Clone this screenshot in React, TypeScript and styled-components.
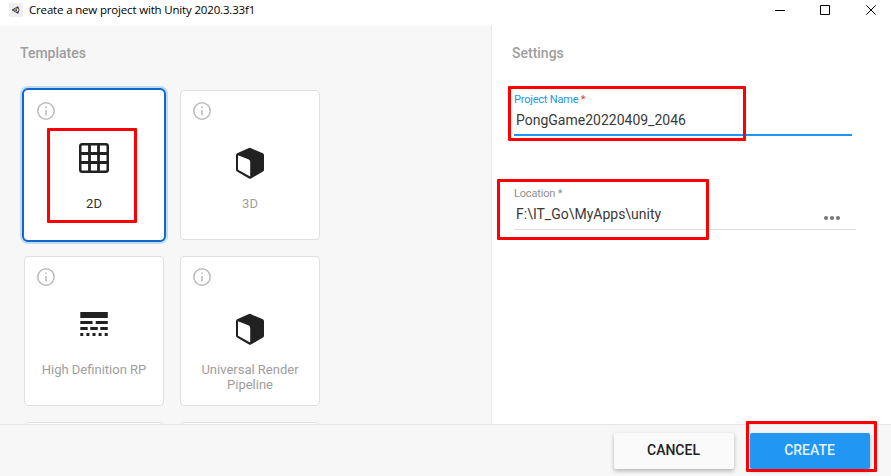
import React from "react";
import styled, { createGlobalStyle } from "styled-components";

const GlobalStyle = createGlobalStyle`
  * { box-sizing: border-box; }
  body { margin: 0; overflow: hidden; font-family: Roboto, sans-serif; background: #fff; }
  svg { display: block; }
`;

const Window = styled.div`
  position: relative;
  width: 891px;
  height: 476px;
  display: flex;
  flex-direction: column;
  overflow: hidden;
`;

const TitleBar = styled.header`
  flex: none;
  height: 26px;
  display: flex;
  align-items: flex-start;
  padding-left: 9px;
  background: #fff;
`;

const AppIcon = styled.svg`
  margin-top: 3px;
`;

const Title = styled.span`
  margin-left: 6px;
  flex: 1;
  font: 11.5px/20px "Open Sans", sans-serif;
  letter-spacing: -0.17px;
  color: #000;
  white-space: nowrap;
`;

const WindowControls = styled.div`
  display: flex;
  gap: 35px;
  padding: 5px 15px 0 0;
`;

const Body = styled.main`
  flex: 1;
  min-height: 0;
  display: flex;
`;

const TemplatesPane = styled.section`
  width: 492px;
  border-right: 1px solid #e8e8e8;
  background: #f7f7f7;
  overflow: hidden;
`;

const SettingsPane = styled.section`
  flex: 1;
  background: #fff;
`;

const Heading = styled.h2`
  margin: 17px 0 0 20px;
  font-size: 14px;
  line-height: 20px;
  font-weight: 500;
  color: #9e9e9e;
`;

const Cards = styled.div`
  display: grid;
  grid-template-columns: 140px 140px;
  grid-auto-rows: 150px;
  gap: 16px;
  margin: 27px 0 0 24px;
`;

const Card = styled.div<{ $selected?: boolean }>`
  display: flex;
  flex-direction: column;
  align-items: center;
  background: #fff;
  border: ${p => (p.$selected ? "2px solid #1069c9" : "1px solid #e0e0e0")};
  border-radius: ${p => (p.$selected ? 6 : 4)}px;
  margin: ${p => (p.$selected ? -2 : 0)}px;
  padding: ${p => (p.$selected ? "12px 13px" : "11px 12px")};
  box-shadow: ${p => (p.$selected ? "0 0 0 2px #c0dbf7" : "none")};
`;

const InfoIcon = styled.svg`
  align-self: flex-start;
  flex: none;
`;

const Picture = styled.div<{ $drop: number }>`
  height: 72px;
  padding-top: ${p => p.$drop}px;
`;

const CardName = styled.div<{ $selected?: boolean }>`
  margin-top: 2px;
  width: 116px;
  text-align: center;
  font-size: 13px;
  line-height: 15px;
  color: ${p => (p.$selected ? "#303030" : "#9e9e9e")};
`;

const Fields = styled.div`
  display: flex;
  flex-direction: column;
  gap: 51px;
  padding: 30px 0 0 22px;
`;

const Field = styled.label<{ $active?: boolean }>`
  display: flex;
  flex-direction: column;
  width: ${p => (p.$active ? 338 : 342)}px;
  height: 43px;
  border-bottom: ${p => (p.$active ? "2px solid #2196f3" : "1px solid #dedede")};
`;

const FieldLabel = styled.span<{ $active?: boolean }>`
  font-size: 11px;
  line-height: 14px;
  letter-spacing: ${p => (p.$active ? "-0.2px" : "-0.18px")};
  color: ${p => (p.$active ? "#2196f3" : "#8f8f8f")};
`;

const Required = styled.span<{ $active?: boolean }>`
  color: ${p => (p.$active ? "#e53935" : "inherit")};
`;

const ValueRow = styled.div`
  display: flex;
  align-items: center;
  justify-content: space-between;
  padding: 3px 15px 0 2px;
`;

const Value = styled.span`
  font-size: 14px;
  line-height: 20px;
  color: #3a3a3a;
  white-space: nowrap;
`;

const Browse = styled.svg`
  margin-right: 1px;
`;

const Footer = styled.footer`
  flex: none;
  height: 52px;
  display: flex;
  justify-content: flex-end;
  gap: 16px;
  padding: 8px 21px 0 0;
  border-top: 1px solid #e6e6e6;
  background: #f7f7f7;
`;

const Button = styled.button<{ $primary?: boolean }>`
  width: 120px;
  height: 36px;
  border: 0;
  border-radius: 2px;
  padding: 0 1px 2px 0;
  font: 500 14px/34px Roboto, sans-serif;
  color: ${p => (p.$primary ? "#e3f2fd" : "#212121")};
  background: ${p => (p.$primary ? "#2196f3" : "#fafafa")};
  box-shadow: 0 2px 4px rgba(0, 0, 0, 0.28);
`;

const Highlight = styled.div<{ $x: number; $y: number; $w: number; $h: number }>`
  position: absolute;
  left: ${p => p.$x}px;
  top: ${p => p.$y}px;
  width: ${p => p.$w}px;
  height: ${p => p.$h}px;
  border: 3px solid #f00;
  border-radius: 1px;
  pointer-events: none;
`;

const Info = () => (
  <InfoIcon width="20" height="20" viewBox="0 0 20 20" fill="none">
    <circle cx="9" cy="9" r="8.2" stroke="#bdbdbd" strokeWidth="1.6" />
    <path d="M9 8v5.5M9 4.6v1.7" stroke="#bdbdbd" strokeWidth="1.6" />
  </InfoIcon>
);

const Grid = () => (
  <svg width="30" height="30" viewBox="0 0 30 30" fill="none" stroke="#212121">
    <rect x="1.25" y="1.25" width="27.5" height="27.5" rx="2" strokeWidth="2.5" />
    <path d="M10.5 1v28M19.5 1v28M1 10.5h28M1 19.5h28" strokeWidth="2.8" />
  </svg>
);

const Cube = () => (
  <svg width="28" height="32" viewBox="0 0 28 32">
    <path d="M14 .8 26.8 6.3Q28 7 28 8.2V22.8Q28 24 27 24.6L15 31.4Q14 31.9 13 31.4L1 24.6Q0 24 0 22.8V8.2Q0 7 1.2 6.3L13 .9Q14 .5 15 .9Z" fill="#212121" />
    <path d="M2 8.2 12.3 12.2Q14.2 13 14.2 15V29.4L2 22.7Z" fill="#fff" />
  </svg>
);

const Lines = () => (
  <svg width="28" height="24" viewBox="0 0 28 24" fill="#212121">
    <path d="M.3 0H27.8V6H.3ZM.3 9H12.5V12H.3ZM15.7 9H27.8V12H15.7ZM.3 15H7.7V18H.3ZM10.3 15H17.8V18H10.3ZM20.3 15H27.8V18H20.3ZM.3 21H3.3V24H.3ZM6.4 21H9.4V24H6.4ZM12.5 21H15.5V24H12.5ZM18.6 21H21.6V24H18.6ZM24.7 21H27.7V24H24.7Z" />
  </svg>
);

const templates = [
  { name: "2D", icon: <Grid />, drop: 21, selected: true },
  { name: "3D", icon: <Cube />, drop: 25 },
  { name: "High Definition RP", icon: <Lines />, drop: 24 },
  { name: "Universal Render Pipeline", icon: <Cube />, drop: 25 },
];

export default function App() {
  return (
    <Window>
      <GlobalStyle />
      <TitleBar>
        <AppIcon width="14" height="14" viewBox="0 0 14 14">
          <path d="M0 0H14V14H0Z" fill="#eee" />
          <path d="M3.2 7 8.9 3.7 10 7 8.9 10.3ZM3.5 7H7L9 3.8M7 7 9 10.2" fill="none" stroke="#444" strokeWidth="1" />
        </AppIcon>
        <Title>Create a new project with Unity 2020.3.33f1</Title>
        <WindowControls>
          <svg width="10" height="10"><path d="M0 5.5H10" stroke="#000" /></svg>
          <svg width="11" height="10"><path d="M.5 .5H9.5V9.5H.5Z" fill="none" stroke="#000" /></svg>
          <svg width="10" height="10"><path d="M.3 .3 9.7 9.7M9.7 .3 .3 9.7" stroke="#000" /></svg>
        </WindowControls>
      </TitleBar>
      <Body>
        <TemplatesPane>
          <Heading>Templates</Heading>
          <Cards>
            {templates.map(t => (
              <Card key={t.name} $selected={t.selected}>
                <Info />
                <Picture $drop={t.drop}>{t.icon}</Picture>
                <CardName $selected={t.selected}>{t.name}</CardName>
              </Card>
            ))}
            <Card />
            <Card />
          </Cards>
        </TemplatesPane>
        <SettingsPane>
          <Heading>Settings</Heading>
          <Fields>
            <Field $active>
              <FieldLabel $active>Project Name <Required $active>*</Required></FieldLabel>
              <ValueRow><Value>PongGame20220409_2046</Value></ValueRow>
            </Field>
            <Field>
              <FieldLabel>Location <Required>*</Required></FieldLabel>
              <ValueRow>
                <Value>F:\IT_Go\MyApps\unity</Value>
                <Browse width="17" height="12" fill="#757575">
                  <circle cx="3" cy="10" r="2" /><circle cx="9" cy="10" r="2" /><circle cx="15" cy="10" r="2" />
                </Browse>
              </ValueRow>
            </Field>
          </Fields>
        </SettingsPane>
      </Body>
      <Footer>
        <Button>CANCEL</Button>
        <Button $primary>CREATE</Button>
      </Footer>
      <Highlight $x={47} $y={128} $w={90} $h={95} />
      <Highlight $x={508} $y={86} $w={238} $h={55} />
      <Highlight $x={497} $y={179} $w={212} $h={61} />
      <Highlight $x={746} $y={421} $w={131} $h={51} />
    </Window>
  );
}
